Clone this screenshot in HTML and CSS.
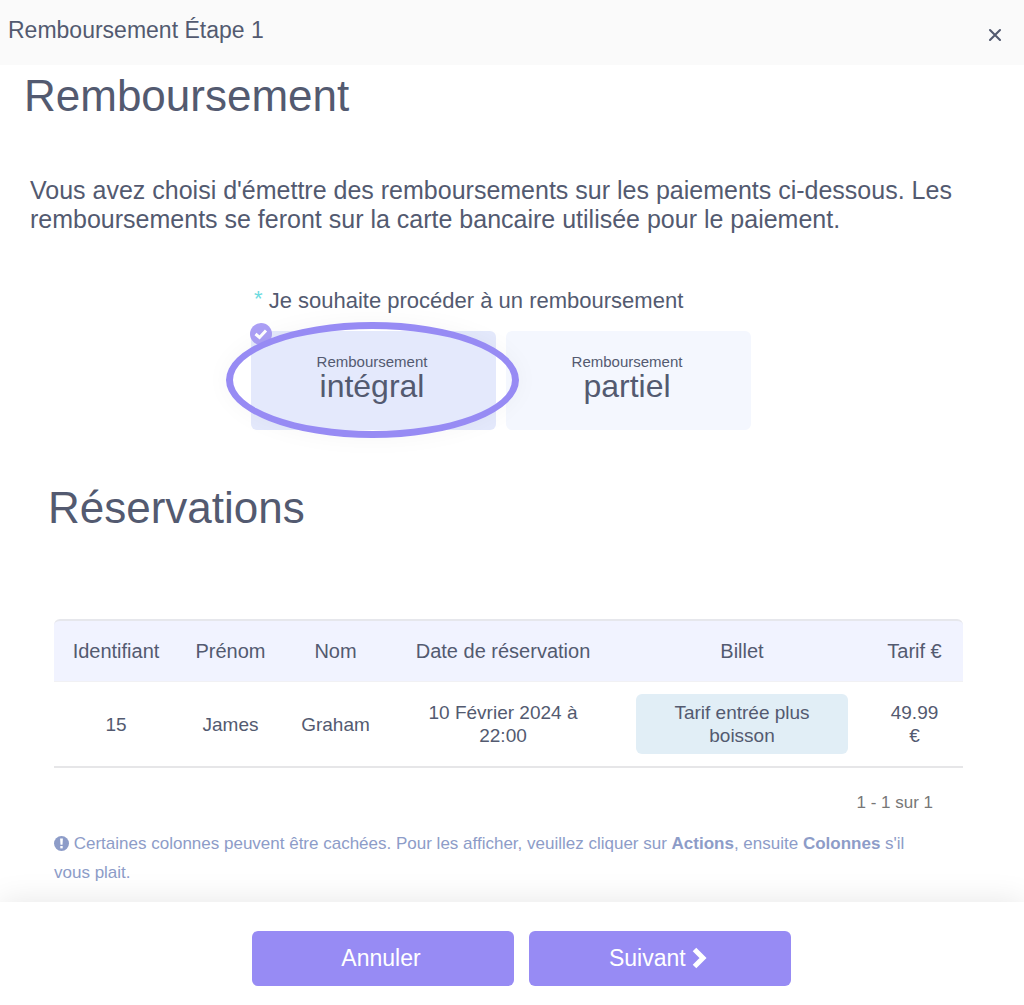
FILE: index.html
```html
<!DOCTYPE html>
<html lang="fr">
<head>
<meta charset="UTF-8">
<meta name="viewport" content="width=device-width, initial-scale=1.0">
<title>Remboursement Étape 1</title>
<link rel="stylesheet" href="styles.css">
</head>
<body>

<header class="dialog-header">
    <span class="dialog-title">Remboursement Étape 1</span>
    <button type="button" class="close-button" aria-label="Fermer">
        <svg width="14" height="14" viewBox="0 0 14 14"><path d="M2 2L12 12M12 2L2 12" stroke="currentColor" stroke-width="2.1" stroke-linecap="round" fill="none"/></svg>
    </button>
</header>

<main class="dialog-body">
    <h1>Remboursement</h1>

    <p class="intro">Vous avez choisi d'émettre des remboursements sur les paiements ci-dessous. Les remboursements se feront sur la carte bancaire utilisée pour le paiement.</p>

    <fieldset class="refund-type">
        <legend><span class="required">*</span> Je souhaite procéder à un remboursement</legend>
        <div class="options">
            <label class="option">
                <input type="radio" name="refund" value="full" checked>
                <span class="option-small">Remboursement</span>
                <span class="option-big">intégral</span>
                <svg class="check" width="22" height="22" viewBox="0 0 22 22"><circle cx="11" cy="11" r="11" fill="#ab9ff5"/><path d="M5.5 11L9.5 14.5L16 7.5" stroke="#fff" stroke-width="3" fill="none"/></svg>
                <span class="highlight"></span>
            </label>
            <label class="option">
                <input type="radio" name="refund" value="partial">
                <span class="option-small">Remboursement</span>
                <span class="option-big">partiel</span>
            </label>
        </div>
    </fieldset>

    <section class="bookings">
        <h2>Réservations</h2>

        <table>
            <thead>
                <tr>
                    <th class="col-id">Identifiant</th>
                    <th class="col-name">Prénom</th>
                    <th class="col-name">Nom</th>
                    <th class="col-date">Date de réservation</th>
                    <th>Billet</th>
                    <th class="col-price">Tarif €</th>
                </tr>
            </thead>
            <tbody>
                <tr>
                    <td>15</td>
                    <td>James</td>
                    <td>Graham</td>
                    <td class="date">10 Février 2024 à 22:00</td>
                    <td><span class="ticket">Tarif entrée plus boisson</span></td>
                    <td>49.99 €</td>
                </tr>
            </tbody>
        </table>

        <div class="pagination">1 - 1 sur 1</div>

        <p class="note"><svg class="note-icon" width="15" height="15" viewBox="0 0 15 15"><circle cx="7.5" cy="7.5" r="7.5" fill="currentColor"/><path d="M6.1 2.6H8.9L8.5 8.7H6.5Z" fill="#fff"/><rect x="6.3" y="10" width="2.4" height="2.4" fill="#fff"/></svg> Certaines colonnes peuvent être cachées. Pour les afficher, veuillez cliquer sur <strong>Actions</strong>, ensuite <strong>Colonnes</strong> s'il vous plait.</p>
    </section>
</main>

<footer class="dialog-footer">
    <button type="button" class="button">Annuler</button>
    <button type="button" class="button">Suivant <svg width="15" height="22" viewBox="0 0 15 22"><path d="M2.5 2.5L11 11L2.5 19.5" stroke="currentColor" stroke-width="5" fill="none"/></svg></button>
</footer>

</body>
</html>
```
FILE: styles.css
```css
* {
    box-sizing: border-box;
}

body {
    margin: 0;
    min-height: 100vh;
    display: flex;
    flex-direction: column;
    background-color: #fff;
    color: #535a70;
    font-family: "Liberation Sans", Arial, sans-serif;
}

h1, h2 {
    margin: 0;
    font-size: 44px;
    line-height: 52px;
    font-weight: normal;
}

/* Header */
.dialog-header {
    display: flex;
    justify-content: space-between;
    align-items: flex-start;
    padding: 16px 16px 17px 8px;
    background-color: #fafafa;
}

.dialog-title {
    font-size: 23px;
    line-height: 28px;
}

.close-button {
    display: flex;
    margin-top: 6px;
    padding: 6px;
    border: none;
    background: none;
    color: #535a70;
    cursor: pointer;
}

/* Content */
.dialog-body {
    flex: 1;
    padding: 5px 24px 14px;
}

.intro {
    margin: 54px 36px 54px 6px;
    font-size: 25px;
    line-height: 29px;
}

.refund-type {
    width: 500px;
    max-width: 100%;
    margin: 0 auto;
    padding: 0;
    border: none;
    position: relative;
    right: 11px;
}

.refund-type legend {
    padding: 0 0 0 3px;
    font-size: 22px;
    line-height: 26px;
}

.required {
    color: #6ddbe0;
    line-height: 20px;
    vertical-align: 2px;
}

.options {
    display: flex;
    gap: 10px;
    margin-top: 17px;
}

.option {
    flex: 1;
    display: flex;
    flex-direction: column;
    align-items: center;
    position: relative;
    height: 99px;
    padding: 22px 3px 0 0;
    border-radius: 6px;
    background-color: #f4f7fe;
    cursor: pointer;
}

.option:has(input:checked) {
    background-color: #e4e9fc;
}

.option input {
    position: absolute;
    opacity: 0;
}

.option-small {
    font-size: 15px;
    line-height: 18px;
}

.option-big {
    font-size: 32px;
    line-height: 30px;
}

.check {
    position: absolute;
    top: -8px;
    left: -1px;
}

.highlight {
    position: absolute;
    top: -9px;
    right: -23px;
    bottom: -8px;
    left: -25px;
    z-index: 1;
    border: 7px solid #978bf4;
    border-radius: 50%;
    box-shadow: 0 0 24px rgba(0, 0, 0, 0.04);
}

/* Bookings */
.bookings {
    padding: 52px 37px 0 30px;
}

.bookings h2 {
    margin: 0 0 85px -6px;
}

table {
    width: 100%;
    table-layout: fixed;
    border-collapse: separate;
    border-spacing: 0;
    text-align: center;
}

th {
    height: 63px;
    padding: 0;
    border-top: 2px solid #e6e7ec;
    border-bottom: 1px solid #f1f1f4;
    background-color: #f1f3ff;
    font-size: 20px;
    font-weight: normal;
}

th:first-child {
    border-top-left-radius: 6px;
}

th:last-child {
    border-top-right-radius: 6px;
}

.col-id {
    width: 124px;
}

.col-name {
    width: 105px;
}

.col-date {
    width: 230px;
}

.col-price {
    width: 97px;
}

td {
    padding: 12px 18px;
    border-bottom: 2px solid #e6e6e8;
    font-size: 19px;
    line-height: 23px;
}

.date {
    padding: 12px 36px;
}

.ticket {
    display: block;
    padding: 7px 30px;
    border-radius: 6px;
    background-color: #e1eef6;
}

.pagination {
    margin: 25px 30px 16px 0;
    color: #777;
    font-size: 17px;
    line-height: 20px;
    text-align: right;
}

.note {
    margin: 0 30px 0 0;
    color: #8d9cc8;
    font-size: 17px;
    line-height: 29px;
}

.note-icon {
    vertical-align: -2px;
}

/* Footer */
.dialog-footer {
    display: flex;
    justify-content: center;
    gap: 15px;
    padding: 29px 0 19px 19px;
    background-color: #fff;
    box-shadow: 0 0 30px rgba(0, 0, 0, 0.1);
}

.button {
    width: 262px;
    height: 55px;
    padding: 0 4px 0 0;
    border: none;
    border-radius: 6px;
    background-color: #978bf4;
    color: #fff;
    font-family: inherit;
    font-size: 23px;
    cursor: pointer;
}

.button svg {
    vertical-align: -3px;
}
```
